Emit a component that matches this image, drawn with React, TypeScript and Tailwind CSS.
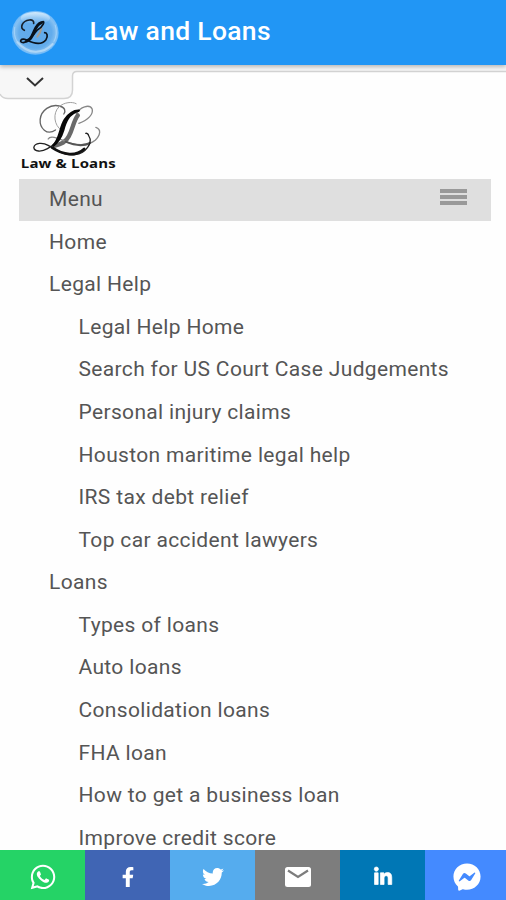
import { FaWhatsapp, FaFacebookF, FaTwitter, FaLinkedinIn, FaFacebookMessenger } from "react-icons/fa";

type Entry = { label: string; sub?: boolean };

const entries: Entry[] = [
  { label: "Home" },
  { label: "Legal Help" },
  { label: "Legal Help Home", sub: true },
  { label: "Search for US Court Case Judgements", sub: true },
  { label: "Personal injury claims", sub: true },
  { label: "Houston maritime legal help", sub: true },
  { label: "IRS tax debt relief", sub: true },
  { label: "Top car accident lawyers", sub: true },
  { label: "Loans" },
  { label: "Types of loans", sub: true },
  { label: "Auto loans", sub: true },
  { label: "Consolidation loans", sub: true },
  { label: "FHA loan", sub: true },
  { label: "How to get a business loan", sub: true },
  { label: "Improve credit score", sub: true },
];

function BubbleLogo() {
  return (
    <svg viewBox="30 30 150 138" className="h-[46px] w-[50px] shrink-0" fill="none" strokeLinecap="round">
      <defs>
        <radialGradient id="bubble" cx="50%" cy="50%" r="50%">
          <stop offset="0" stopColor="#62a9e8" />
          <stop offset="0.7" stopColor="#62acec" />
          <stop offset="0.9" stopColor="#86c1f2" />
          <stop offset="1" stopColor="#6db9fa" />
        </radialGradient>
        <linearGradient id="shine" x1="0" y1="0" x2="0" y2="1">
          <stop offset="0" stopColor="#e3f3ff" stopOpacity="0.8" />
          <stop offset="1" stopColor="#e3f3ff" stopOpacity="0" />
        </linearGradient>
      </defs>
      <ellipse cx="106" cy="98" rx="70" ry="66" fill="url(#bubble)" />
      <ellipse cx="106" cy="54" rx="44" ry="18" fill="url(#shine)" />
      <path d="M52 126Q78 156 108 155T158 132" stroke="#b9dcf8" strokeWidth="6" opacity="0.8" />
      <path d="M44 82Q40 106 50 122M166 76Q174 104 162 124" stroke="#a9d6fa" strokeWidth="3" opacity="0.8" />
      <path d="M112 110Q122 98 124 84" stroke="#a39c91" strokeWidth="6" />
      <path d="M73 91C58 83 66 63 88 60C99 59 102 64 101 70" stroke="#17202a" strokeWidth="5" />
      <path d="M126 66C138 60 128 82 111 91C99 105 88 126 70 128C55 127 62 112 80 120C96 128 124 137 138 119C145 108 141 98 134 98" stroke="#0a131d" strokeWidth="5" />
      <path d="M124 68C107 72 105 93 96 108C92 117 87 121 80 123" stroke="#071019" strokeWidth="9" />
    </svg>
  );
}

function BrandLogo() {
  return (
    <svg viewBox="60 120 290 225" className="h-[75px] w-[97px]" fill="none" strokeLinecap="round">
      <path d="M166 210C140 228 118 204 120 178C123 151 151 131 178 138C195 142 197 153 191 162" stroke="#666" strokeWidth="4" />
      <path d="M184 211C161 196 157 159 177 140C192 127 215 124 228 131" stroke="#a0a0a0" strokeWidth="3" />
      <path d="M236 190C264 180 280 163 276 147C268 131 240 141 228 161" stroke="#888" strokeWidth="4" />
      <path d="M233 166C220 182 219 205 206 229C197 247 184 252 162 258" stroke="#6a6a6a" strokeWidth="13" />
      <path d="M144 237C150 225 169 232 190 242C223 257 264 259 285 241C301 225 304 207 287 202" stroke="#888" strokeWidth="4" />
      <path d="M196 245C222 256 250 259 270 249" stroke="#555" strokeWidth="6" />
      <path d="M238 151C206 155 191 184 184 211C179 235 166 253 142 266C123 277 102 275 101 262C104 248 128 247 144 256C171 271 193 288 225 284C257 280 279 248 266 228C264 221 259 219 257 220" stroke="#222" strokeWidth="4" />
      <path d="M237 152C204 160 195 188 189 211C183 231 174 246 158 258C181 235 178 204 194 179C207 160 222 151 237 152Z" fill="#080808" stroke="#080808" strokeWidth="7" />
      <path d="M156 263C190 286 227 290 252 267" stroke="#111" strokeWidth="8" />
      <text x="62" y="323" textLength="285" lengthAdjust="spacingAndGlyphs" className="fill-[#111] font-['Open_Sans',sans-serif] text-[37px] leading-none font-bold">
        Law &amp; Loans
      </text>
    </svg>
  );
}

function MailIcon() {
  return (
    <svg viewBox="0 0 26 20" className="h-5 w-[26px]">
      <rect width="26" height="20" rx="2.5" fill="#fff" />
      <path d="M3 3.5L13 10L23 3.5" fill="none" stroke="#7d7d7d" strokeWidth="2.2" />
    </svg>
  );
}

export default function App() {
  return (
    <div className="relative flex h-[900px] w-[506px] flex-col overflow-hidden bg-[#fefefe] font-[Roboto,sans-serif]">
      <header className="z-20 flex h-[65px] shrink-0 items-center bg-[#2196f5] pl-[10px] shadow-[0_2px_4px_rgba(0,0,0,0.25)]">
        <BubbleLogo />
        <h1 className="mb-[3px] ml-[29.5px] text-[26.5px] leading-none font-medium tracking-[0.3px] text-white">Law and Loans</h1>
      </header>

      {/* Pull-down tab: its outline runs on to the right as the strip's lower edge */}
      <div className="flex h-[35px] shrink-0 items-start">
        <svg viewBox="0 0 506 35" className="h-[35px] w-[506px]" fill="none" role="img" aria-label="Expand">
          <path d="M0 0H506V6.5H77Q72.500 6.500 72.500 11V25Q72.500 33.500 64 33.500H8Q2 33.500 0 29Z" fill="#f7f7f7" />
          <path d="M506 6.500H77Q72.500 6.500 72.500 11V25Q72.500 33.500 64 33.500H8Q2 33.500 0 29" stroke="#d3d3d3" strokeWidth="1.500" />
          <path d="M27 13L35 20.500L43 13" stroke="#333" strokeWidth="2" />
        </svg>
      </div>

      <main className="flex flex-col pr-[15px] pl-[19px] text-[21px] tracking-[0.34px] text-[#555]">
        <div className="flex h-[78.5px] shrink-0 items-start pl-px">
          <BrandLogo />
        </div>
        <div className="flex h-[42px] shrink-0 items-center justify-between bg-[#dfdfdf] pr-[24px] pl-[30px]">
          <span>Menu</span>
          <span className="mb-[5px] flex flex-col gap-[2px]">
            <i className="h-1 w-[27px] bg-[#999]" />
            <i className="h-1 w-[27px] bg-[#999]" />
            <i className="h-1 w-[27px] bg-[#999]" />
          </span>
        </div>
        <nav className="pt-[0.5px]">
          {entries.map((e) => (
            <div key={e.label} className={`flex h-[42.6px] items-center whitespace-nowrap ${e.sub ? "pl-[59.5px]" : "pl-[30px]"}`}>
              {e.label}
            </div>
          ))}
        </nav>
      </main>

      <footer className="absolute inset-x-0 bottom-0 z-20 grid h-[50.5px] grid-cols-[85px_85px_85px_85px_85px_81px] text-white">
        <div className="flex items-center justify-center bg-[#25d366] pt-[4px]"><FaWhatsapp size={28} /></div>
        <div className="flex items-center justify-center bg-[#4065b4] pt-[4px]"><FaFacebookF size={20} /></div>
        <div className="flex items-center justify-center bg-[#55acee] pt-[4px]"><FaTwitter size={22} /></div>
        <div className="flex items-center justify-center bg-[#7d7d7d] pt-[4px]"><MailIcon /></div>
        <div className="flex items-center justify-center bg-[#0077b5] pt-[4px]">
          <FaLinkedinIn size={20} className="overflow-visible stroke-white [stroke-width:18px]" />
        </div>
        <div className="flex items-center justify-center bg-[#448aff] pt-[4px] pl-[3px]"><FaFacebookMessenger size={28} /></div>
      </footer>
    </div>
  );
}
